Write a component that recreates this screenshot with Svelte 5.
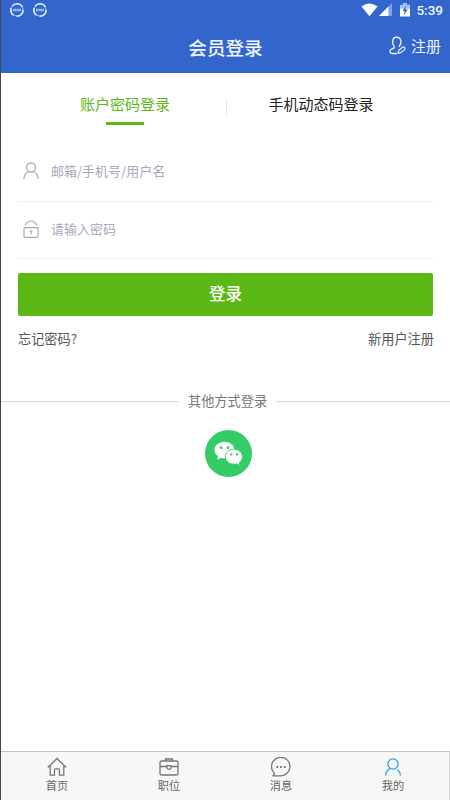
<script lang="ts">
	type Mode = 'password' | 'code';

	const modes: { id: Mode; label: string }[] = [
		{ id: 'password', label: '账户密码登录' },
		{ id: 'code', label: '手机动态码登录' }
	];

	const navItems = [
		{ id: 'home', label: '首页' },
		{ id: 'jobs', label: '职位' },
		{ id: 'messages', label: '消息' },
		{ id: 'mine', label: '我的' }
	];

	let mode = $state<Mode>('password');
	let activeNav = $state('mine');
	let account = $state('');
	let password = $state('');
</script>

<div class="screen">
	<header>
		<div class="status-bar">
			<div class="notifications">
				{#each [0, 1] as n (n)}
					<svg width="16" height="16" viewBox="0 0 16 16" fill="none">
						<circle cx="8" cy="8" r="6" stroke="#a9c8f5" stroke-width="1" />
						<circle
							cx="8"
							cy="8"
							r="6.2"
							stroke="#d9e9ff"
							stroke-width="1.6"
							stroke-dasharray="10 3 8 2 12 4"
						/>
						<path d="M4 8h8" stroke="#a9c8f5" stroke-width="2.6" stroke-dasharray="1.6 .5" />
					</svg>
				{/each}
			</div>
			<div class="system">
				<svg width="17" height="14" viewBox="0 0 17 14">
					<path d="M.5 3.5Q8.5-2.5 16.5 3.5L8.5 13.2Z" fill="#fff" />
				</svg>
				<svg class="signal" width="13" height="13" viewBox="0 0 13 13">
					<path d="M0 13 13 0V13Z" fill="#7ea2e2" />
					<path d="M0 13 9.5 3.5V13Z" fill="#fff" />
				</svg>
				<svg class="battery" width="10" height="14" viewBox="0 0 10 14">
					<path d="M3 0h4v1.7h3v4H0v-4h3Z" fill="#a9c2ee" />
					<path d="M0 5.5h10V13.5H0Z" fill="#fff" />
					<path d="M6 2.8 2.5 8h2L4 12l3.7-5.5H5.5Z" fill="#3366cc" />
				</svg>
				<span class="time">5:39</span>
			</div>
		</div>
		<div class="title-bar">
			<h1>会员登录</h1>
			<button class="register">
				<svg width="17" height="19" viewBox="0 0 17 19" fill="none" stroke="#e6f0ff" stroke-width="1.4">
					<path
						d="M7.5 17.5H3.2C.4 17.5.3 14 2.6 13.2 4.3 12.6 5.6 12 5.2 10.6 2.7 8 2.7 1.2 7.6 1.2s5.4 6 2.7 9.2"
						stroke-linecap="round"
					/>
					<path
						d="M9 17.2 9.6 14.5l3.8-3.2q1.2-.8 2.1.2t.1 2.1L11.8 16.6Z"
						stroke-width="1.2"
						stroke-linejoin="round"
					/>
				</svg>
				注册
			</button>
		</div>
	</header>

	<main>
		<div class="modes">
			{#each modes as item (item.id)}
				<button class="mode" class:active={mode === item.id} onclick={() => (mode = item.id)}>
					{item.label}
				</button>
			{/each}
		</div>

		<form onsubmit={(e) => e.preventDefault()}>
			<label class="field">
				<svg width="16" height="18" viewBox="0 0 16 18" fill="none" stroke="#aaa9b2" stroke-width="1.3">
					<circle cx="8" cy="5.5" r="4.5" />
					<path d="M.8 17C1.2 13 3.3 10.5 5.8 9.5M10.2 9.5c2.5 1 4.6 3.5 5 7.5" />
				</svg>
				<input type="text" placeholder="邮箱/手机号/用户名" bind:value={account} />
			</label>
			<label class="field">
				<svg width="16" height="18" viewBox="0 0 16 18" fill="none" stroke="#aaa9b2" stroke-width="1.2">
					<rect x="1" y="7.6" width="14" height="9.8" rx=".8" />
					<path d="M2.2 5.2C3.5 2.3 5.5 1 8 1s4.5 1.3 5.8 4.2" />
					<path d="M8 10.5v4M6.6 11.4h2.8" />
				</svg>
				<input type="password" placeholder="请输入密码" bind:value={password} />
			</label>
			<button class="submit">登录</button>
		</form>

		<div class="links">
			<span>忘记密码?</span>
			<span>新用户注册</span>
		</div>

		<div class="other"><span>其他方式登录</span></div>

		<button class="wechat" aria-label="微信">
			<svg width="29" height="25" viewBox="0 0 29 25">
				<path
					d="M10.5.8C4.9.8.5 4.4.5 9c0 2.6 1.4 4.9 3.6 6.3L3.3 18.8l3.6-2.1q1.7.5 3.6.5c5.6 0 10-3.6 10-8.2S16.1.8 10.5.8Z"
					fill="#fff"
				/>
				<path
					d="M20 8.2c-4.9 0-8.6 3.3-8.6 7.5s3.7 7.5 8.6 7.5q1.5 0 2.8-.4l3.2 1.9-.7-3.1c2-1.3 3.2-3.5 3.2-5.9 0-4.2-3.7-7.5-8.5-7.5Z"
					fill="#fff"
					stroke="#33cc66"
					stroke-width=".9"
				/>
				<g fill="#33cc66">
					<circle cx="7" cy="6.7" r="1.4" />
					<circle cx="14" cy="6.7" r="1.4" />
					<circle cx="17.3" cy="13.4" r="1.2" />
					<circle cx="23" cy="13.4" r="1.2" />
				</g>
			</svg>
		</button>
	</main>

	<nav>
		{#each navItems as item (item.id)}
			<button
				class="nav-item"
				class:active={activeNav === item.id}
				onclick={() => (activeNav = item.id)}
			>
				<svg width="20" height="20" viewBox="0 0 20 20" fill="none" stroke="currentColor" stroke-width="1.3">
					{#if item.id === 'home'}
						<path
							d="M.8 10.5 10 1.5l9.2 9M3.2 9v9.2h4.3V13q0-1.2 1.2-1.2h2.6q1.2 0 1.2 1.2v5.2h4.3V9"
						/>
					{:else if item.id === 'jobs'}
						<rect x="1" y="4" width="18" height="14" rx="1.5" />
						<path d="M6.5 4V2h7v2M1 9.5h7M12 9.5h7M8 8.7h4v2.5q-2 2.5-4 0Z" />
					{:else if item.id === 'messages'}
						<path d="M3.5 16.4A9.2 9.2 0 1 1 10 18.8H1.6q1.8-.8 1.9-2.4Z" />
						<path d="M5.4 10h1.8M9.1 10h1.8M12.8 10h1.8" stroke-width="1.8" />
					{:else}
						<circle cx="10" cy="7" r="5.1" />
						<path d="M2.5 18.5c.4-3.3 2-5.6 4.6-7M14.5 12.7c1.7 1.4 2.7 3.3 3 5.8" />
					{/if}
				</svg>
				<span>{item.label}</span>
			</button>
		{/each}
	</nav>
</div>

<style>
	:global(body) {
		background: #fff;
	}

	.screen {
		box-sizing: border-box;
		display: flex;
		flex-direction: column;
		width: 450px;
		height: 800px;
		border-left: 1px solid #48484c;
		font-family: 'Noto Sans CJK SC', sans-serif;
		color: #222;
		background: #fff;
	}

	button {
		padding: 0;
		border: 0;
		background: none;
		font: inherit;
		color: inherit;
		cursor: pointer;
	}

	svg {
		display: block;
		flex: none;
	}

	header {
		height: 73px;
		background: #3366cc;
		color: #f0f6ff;
	}

	.status-bar {
		display: flex;
		justify-content: space-between;
		height: 19px;
		padding: 0 7px 0 8px;
	}

	.notifications,
	.system {
		display: flex;
		align-items: center;
	}

	.notifications {
		gap: 7px;
	}

	.signal {
		margin-left: 1px;
	}

	.battery {
		margin: 0 6px 0 8px;
	}

	.time {
		font: 500 13.5px/20px Roboto, sans-serif;
	}

	.title-bar {
		display: grid;
		grid-template-columns: 1fr auto 1fr;
		align-items: center;
		height: 53px;
		padding: 0 9px;
	}

	h1 {
		grid-column: 2;
		margin: 2px 0 0;
		font-size: 18.6px;
		font-weight: 500;
		line-height: 28px;
	}

	.register {
		display: flex;
		align-items: center;
		justify-self: end;
		gap: 5px;
		font-size: 15px;
		line-height: 22px;
	}

	main {
		flex: 1;
	}

	.modes {
		display: flex;
		height: 71px;
		padding: 0 34px 0 23px;
	}

	.mode {
		position: relative;
		display: flex;
		justify-content: center;
		width: 202px;
		height: 53px;
		padding-top: 20px;
		font-size: 15px;
		line-height: 22px;
	}

	.mode + .mode {
		width: 190px;
	}

	.mode + .mode::before {
		content: '';
		position: absolute;
		top: 25px;
		left: 0;
		width: 1px;
		height: 17px;
		background: #e6e6e6;
	}

	.mode.active {
		color: #5cb815;
	}

	.mode.active::after {
		content: '';
		position: absolute;
		bottom: 1px;
		left: 50%;
		width: 38px;
		height: 3px;
		margin-left: -19px;
		background: #5cb815;
	}

	form {
		padding: 0 17px;
	}

	.field {
		display: flex;
		align-items: center;
		gap: 12px;
		box-sizing: border-box;
		height: 57px;
		padding: 0 0 2px 5px;
		border-bottom: 1px solid #eee;
	}

	.field:first-child {
		height: 58px;
		padding-bottom: 3px;
	}

	input {
		flex: 1;
		min-width: 0;
		padding: 0;
		border: 0;
		outline: 0;
		background: none;
		font: 13px/20px 'Noto Sans CJK SC', sans-serif;
		color: #333;
	}

	input::placeholder {
		color: #a9a7b8;
		opacity: 1;
	}

	.submit {
		display: block;
		width: 100%;
		height: 43px;
		margin-top: 14px;
		padding-bottom: 3px;
		border-radius: 2px;
		background: #5cb815;
		font-size: 16.5px;
		font-weight: 500;
		color: #fff;
	}

	.links {
		display: flex;
		justify-content: space-between;
		padding: 13px 16px 0 17px;
		font-size: 13.2px;
		line-height: 20px;
		color: #555;
	}

	.other {
		display: flex;
		align-items: center;
		gap: 9px;
		margin-top: 42px;
		font-size: 13.2px;
		line-height: 20px;
		color: #777;
	}

	.other::before,
	.other::after {
		content: '';
		flex: 1;
		height: 1px;
		background: #d8d8d8;
	}

	.other::before {
		flex: 0 0 178px;
	}

	.wechat {
		display: flex;
		align-items: center;
		justify-content: center;
		width: 47px;
		height: 47px;
		margin: 19px 0 0 204px;
		border-radius: 50%;
		background: #33cc66;
	}

	nav {
		display: flex;
		box-sizing: border-box;
		height: 49px;
		border-top: 1px solid #c4c4c4;
		border-right: 1px solid #d0d0d0;
		background: #f7f7f7;
	}

	.nav-item {
		display: flex;
		flex: 1;
		flex-direction: column;
		align-items: center;
		padding-top: 5px;
		font-size: 11.2px;
		line-height: 16px;
		color: #777;
	}

	.nav-item span {
		color: #666;
	}

	.nav-item.active {
		color: #2b9df0;
	}
</style>
